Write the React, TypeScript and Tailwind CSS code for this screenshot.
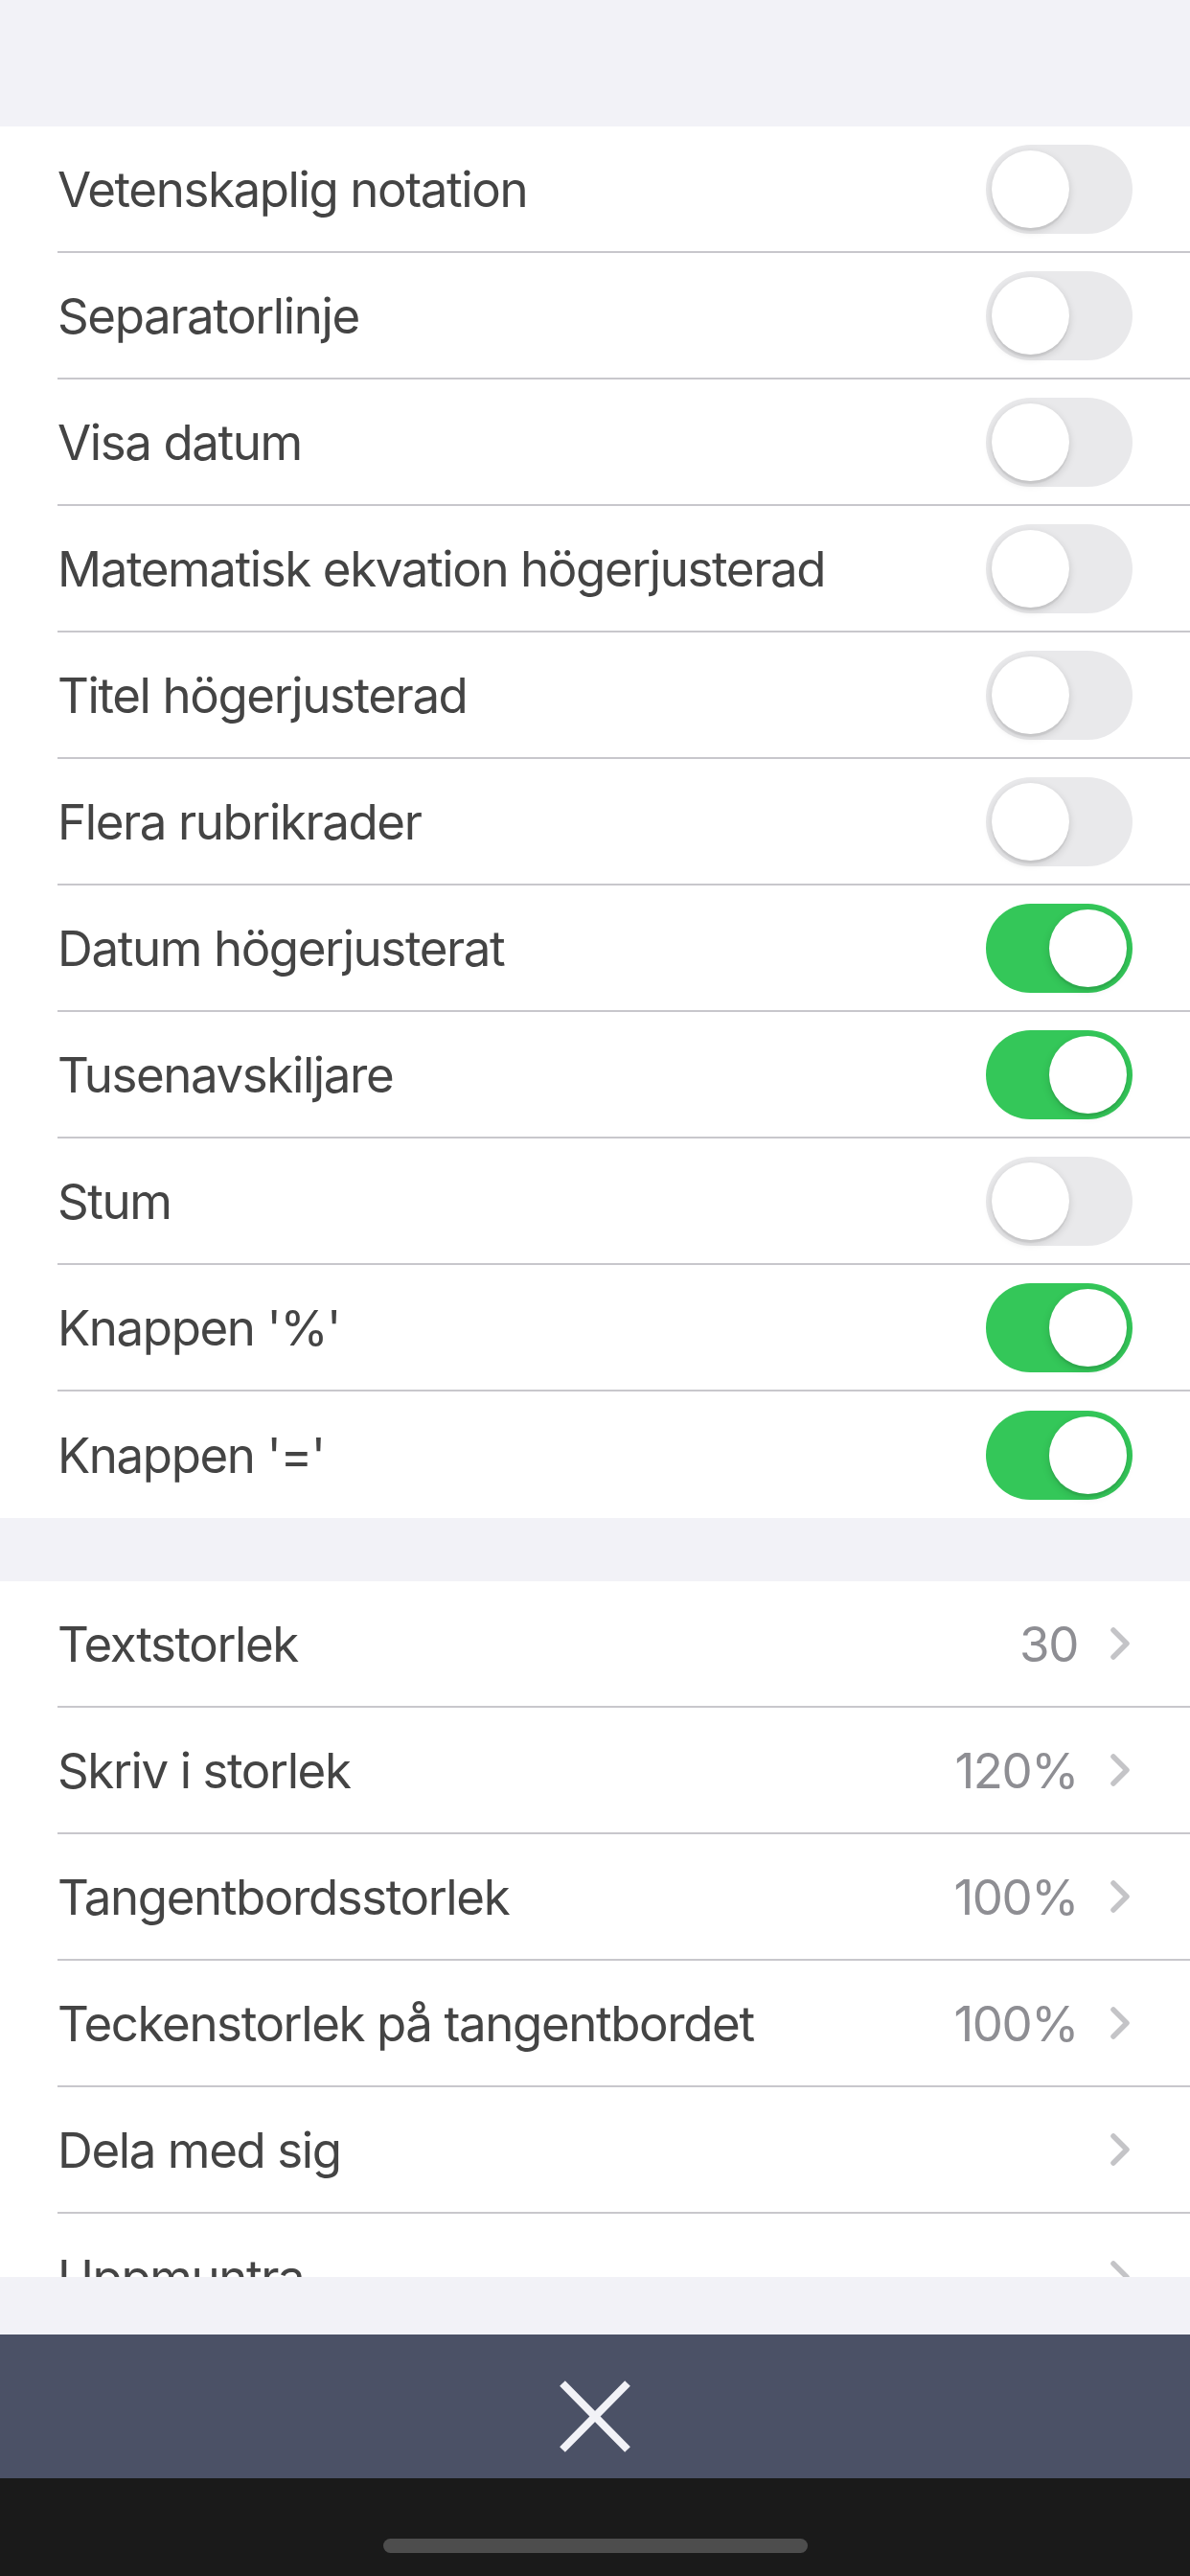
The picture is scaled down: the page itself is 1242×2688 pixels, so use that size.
import { type ReactElement } from 'react';

type ToggleRow = { label: string; on: boolean };
type LinkRow = { label: string; value?: string };

const TOGGLE_ROWS: ToggleRow[] = [
  { label: 'Vetenskaplig notation', on: false },
  { label: 'Separatorlinje', on: false },
  { label: 'Visa datum', on: false },
  { label: 'Matematisk ekvation högerjusterad', on: false },
  { label: 'Titel högerjusterad', on: false },
  { label: 'Flera rubrikrader', on: false },
  { label: 'Datum högerjusterat', on: true },
  { label: 'Tusenavskiljare', on: true },
  { label: 'Stum', on: false },
  { label: "Knappen '%'", on: true },
  { label: "Knappen '='", on: true },
];

const LINK_ROWS: LinkRow[] = [
  { label: 'Textstorlek', value: '30' },
  { label: 'Skriv i storlek', value: '120%' },
  { label: 'Tangentbordsstorlek', value: '100%' },
  { label: 'Teckenstorlek på tangentbordet', value: '100%' },
  { label: 'Dela med sig' },
  { label: 'Uppmuntra' },
];

function Switch({ on }: { on: boolean }): ReactElement {
  return (
    <div
      className={
        on
          ? 'flex h-[93px] w-[153px] shrink-0 items-center justify-end rounded-full bg-[#34c759] p-[6px]'
          : 'flex h-[93px] w-[153px] shrink-0 items-center justify-start rounded-full bg-[#e9e9eb] p-[6px]'
      }
    >
      <div className="h-[81px] w-[81px] rounded-full bg-white shadow-[0_3px_8px_rgba(0,0,0,0.15),0_3px_1px_rgba(0,0,0,0.06)]" />
    </div>
  );
}

function Chevron(): ReactElement {
  return (
    <svg width="21" height="34" viewBox="0 0 21 34" className="shrink-0">
      <path
        d="M3 3 L17 17 L3 31"
        fill="none"
        stroke="#c4c4c7"
        strokeWidth="5.5"
        strokeLinecap="round"
        strokeLinejoin="round"
      />
    </svg>
  );
}

function Row({ children, last }: { children: ReactElement[]; last?: boolean }): ReactElement {
  return (
    <div className="flex h-[132px] shrink-0 pl-[60px]">
      <div
        className={
          last
            ? 'flex flex-1 items-center justify-between pr-[60px]'
            : 'flex flex-1 items-center justify-between border-b-[2px] border-[#c8c7cc] pr-[60px]'
        }
      >
        {children}
      </div>
    </div>
  );
}

export default function App(): ReactElement {
  return (
    <div
      className="flex h-[2688px] w-[1242px] flex-col bg-[#f2f2f7] text-[51px] text-[#444444]"
      style={{ fontFamily: 'Inter, "Liberation Sans", sans-serif' }}
    >
      <div className="h-[132px] shrink-0" />

      {/* scrolling settings list */}
      <div className="flex h-[2244px] shrink-0 flex-col overflow-hidden">
        <div className="flex shrink-0 flex-col bg-white">
          {TOGGLE_ROWS.map((row, i) => (
            <Row key={row.label} last={i === TOGGLE_ROWS.length - 1}>
              <span className="pt-[3px] tracking-[-1.4px]">{row.label}</span>
              <Switch on={row.on} />
            </Row>
          ))}
        </div>

        <div className="h-[66px] shrink-0" />

        <div className="flex shrink-0 flex-col bg-white">
          {LINK_ROWS.map((row, i) => (
            <Row key={row.label} last={i === LINK_ROWS.length - 1}>
              <span className="pt-[3px] tracking-[-1.4px]">{row.label}</span>
              <div className="flex items-center gap-[34px] pr-[2px]">
                {row.value ? (
                  <span className="pt-[3px] tracking-[-1.4px] text-[#8e8e93]">{row.value}</span>
                ) : (
                  <span />
                )}
                <Chevron />
              </div>
            </Row>
          ))}
        </div>
      </div>

      <div className="h-[60px] shrink-0" />

      {/* close bar */}
      <div className="flex h-[150px] shrink-0 items-center justify-center bg-[#4b5166] pt-[20px]">
        <svg width="76" height="77" viewBox="0 0 76 77">
          <path d="M4 4 L72 73 M72 4 L4 73" stroke="#f2f2f7" strokeWidth="8" />
        </svg>
      </div>

      <div className="flex h-[102px] shrink-0 flex-col items-center bg-[#1a1a1a] pt-[63px]">
        <div className="h-[15px] w-[443px] rounded-full bg-[#4d4d4d]" />
      </div>
    </div>
  );
}
